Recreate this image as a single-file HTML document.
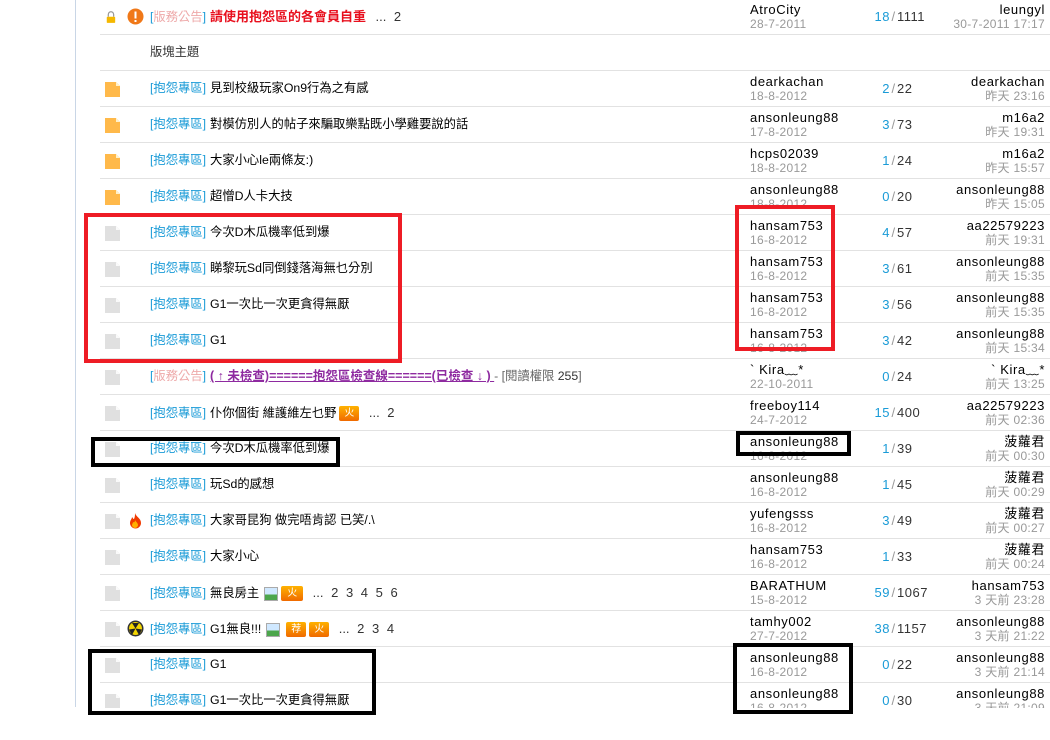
<!DOCTYPE html>
<html><head><meta charset="utf-8">
<style>
*{margin:0;padding:0;box-sizing:border-box}
body{width:1050px;height:740px;background:#fff;position:relative;overflow:hidden;font-family:"Liberation Sans","Noto Sans CJK TC",sans-serif;font-size:12px;color:#000}
.wrap{position:absolute;left:0;top:0;width:1050px;height:708px;overflow:hidden}
.vl{position:absolute;left:75px;top:0;width:1px;height:707px;background:#c9d6e6}
.row{position:absolute;left:100px;width:950px;height:36px;border-bottom:1px solid #e2e2e2}
.ic{position:absolute;left:4px;top:10px;width:17px;height:17px}
.t{position:absolute;left:50px;top:10px;white-space:nowrap;font-size:12.3px;line-height:15px}
.tag{color:#1a9bd7;margin-right:4px}
.pg{color:#333;font-size:13px;margin-left:6px;word-spacing:4px}
.au{position:absolute;left:650px;top:3px;font-size:13px;line-height:15px;white-space:nowrap;letter-spacing:.6px}
.au i{display:block;font-style:normal;color:#999;font-size:12px;line-height:14px;letter-spacing:.3px}
.ct{position:absolute;left:690px;width:200px;top:10px;font-size:13px;color:#333;letter-spacing:.5px;display:grid;grid-template-columns:100px 7px 93px}
.ct b{font-weight:normal;color:#1a9bd7;text-align:right}
.ct s{text-decoration:none;color:#999;text-align:center}
.lp{position:absolute;right:5px;top:3px;text-align:right;font-size:13px;line-height:15px;white-space:nowrap;letter-spacing:.6px}
.lp i{display:block;font-style:normal;color:#999;font-size:12px;line-height:14px;letter-spacing:.3px}
.box{position:absolute;border-style:solid}
.bd{display:inline-block;vertical-align:middle;height:15px;border-radius:2px;color:#fff;font-size:10px;line-height:15px;text-align:center;background:linear-gradient(#ffb200,#f06a00);margin-left:3px}
.pic{display:inline-block;vertical-align:middle;width:14px;height:14px;border:1px solid #aaa;background:linear-gradient(#cfe8ff 55%,#4ca64c 55%);margin-left:5px}
</style></head><body>
<div class="wrap">
<div class="vl"></div>

<div class="row" style="top:-1px">
 <svg class="ic" viewBox="0 0 17 16" style="left:6px;top:10px;width:13px"><path d="M3 7V4a3.5 3.5 0 0 1 7 0v3" fill="none" stroke="#999" stroke-width="1.6"/><rect x="1" y="7" width="11" height="8" rx="1" fill="#f5b800"/></svg>
 <svg style="position:absolute;left:27px;top:9px;width:17px;height:17px" viewBox="0 0 17 17"><circle cx="8.5" cy="8.5" r="8" fill="#f07818"/><rect x="7.5" y="3.5" width="2" height="7" fill="#fff"/><rect x="7.5" y="12" width="2" height="2" fill="#fff"/></svg>
 <div class="t"><span class="tag">[<span style="color:#eaa">版務公告</span>]</span><b style="color:#e8101e;font-size:13px">請使用抱怨區的各會員自重</b> <span class="pg">... 2</span></div>
 <div class="au">AtroCity<i>28-7-2011</i></div>
 <div class="ct"><b>18</b><s>/</s>1111</div>
 <div class="lp">leungyl<i>30-7-2011 17:17</i></div>
</div>
<div class="row" style="top:35px"><div class="t" style="color:#333">版塊主題</div></div>

<div class="row" style="top:71px"><svg class="ic" viewBox="0 0 17 17"><path d="M1 1h11l4 4v11H1z" fill="#ffb94a"/><path d="M12 1v4h4z" fill="#fff2cc"/></svg><div class="t"><span class="tag">[抱怨專區]</span>見到校級玩家On9行為之有感</div><div class="au">dearkachan<i>18-8-2012</i></div><div class="ct"><b>2</b><s>/</s>22</div><div class="lp">dearkachan<i>昨天 23:16</i></div></div>
<div class="row" style="top:107px"><svg class="ic" viewBox="0 0 17 17"><path d="M1 1h11l4 4v11H1z" fill="#ffb94a"/><path d="M12 1v4h4z" fill="#fff2cc"/></svg><div class="t"><span class="tag">[抱怨專區]</span>對模仿別人的帖子來騙取樂點既小學雞要說的話</div><div class="au">ansonleung88<i>17-8-2012</i></div><div class="ct"><b>3</b><s>/</s>73</div><div class="lp">m16a2<i>昨天 19:31</i></div></div>
<div class="row" style="top:143px"><svg class="ic" viewBox="0 0 17 17"><path d="M1 1h11l4 4v11H1z" fill="#ffb94a"/><path d="M12 1v4h4z" fill="#fff2cc"/></svg><div class="t"><span class="tag">[抱怨專區]</span>大家小心le兩條友:)</div><div class="au">hcps02039<i>18-8-2012</i></div><div class="ct"><b>1</b><s>/</s>24</div><div class="lp">m16a2<i>昨天 15:57</i></div></div>
<div class="row" style="top:179px"><svg class="ic" viewBox="0 0 17 17"><path d="M1 1h11l4 4v11H1z" fill="#ffb94a"/><path d="M12 1v4h4z" fill="#fff2cc"/></svg><div class="t"><span class="tag">[抱怨專區]</span>超憎D人卡大技</div><div class="au">ansonleung88<i>18-8-2012</i></div><div class="ct"><b>0</b><s>/</s>20</div><div class="lp">ansonleung88<i>昨天 15:05</i></div></div>

<div class="row" style="top:215px"><svg class="ic" viewBox="0 0 17 17"><path d="M1 1h11l4 4v11H1z" fill="#e0e0e0"/><path d="M12 1v4h4z" fill="#fafafa"/></svg><div class="t"><span class="tag">[抱怨專區]</span>今次D木瓜機率低到爆</div><div class="au">hansam753<i>16-8-2012</i></div><div class="ct"><b>4</b><s>/</s>57</div><div class="lp">aa22579223<i>前天 19:31</i></div></div>
<div class="row" style="top:251px"><svg class="ic" viewBox="0 0 17 17"><path d="M1 1h11l4 4v11H1z" fill="#e0e0e0"/><path d="M12 1v4h4z" fill="#fafafa"/></svg><div class="t"><span class="tag">[抱怨專區]</span>睇黎玩Sd同倒錢落海無乜分別</div><div class="au">hansam753<i>16-8-2012</i></div><div class="ct"><b>3</b><s>/</s>61</div><div class="lp">ansonleung88<i>前天 15:35</i></div></div>
<div class="row" style="top:287px"><svg class="ic" viewBox="0 0 17 17"><path d="M1 1h11l4 4v11H1z" fill="#e0e0e0"/><path d="M12 1v4h4z" fill="#fafafa"/></svg><div class="t"><span class="tag">[抱怨專區]</span>G1一次比一次更貪得無厭</div><div class="au">hansam753<i>16-8-2012</i></div><div class="ct"><b>3</b><s>/</s>56</div><div class="lp">ansonleung88<i>前天 15:35</i></div></div>
<div class="row" style="top:323px"><svg class="ic" viewBox="0 0 17 17"><path d="M1 1h11l4 4v11H1z" fill="#e0e0e0"/><path d="M12 1v4h4z" fill="#fafafa"/></svg><div class="t"><span class="tag">[抱怨專區]</span>G1</div><div class="au">hansam753<i>16-8-2012</i></div><div class="ct"><b>3</b><s>/</s>42</div><div class="lp">ansonleung88<i>前天 15:34</i></div></div>
<div class="row" style="top:359px"><svg class="ic" viewBox="0 0 17 17"><path d="M1 1h11l4 4v11H1z" fill="#e0e0e0"/><path d="M12 1v4h4z" fill="#fafafa"/></svg><div class="t"><span class="tag">[<span style="color:#eaa">版務公告</span>]</span><b style="color:#8e2aa0;text-decoration:underline;font-size:12.5px">( ↑ 未檢查)======抱怨區檢查線======(已檢查 ↓ ) </b> <span style="color:#666">- [閱讀權限 <span style="color:#333">255</span>]</span></div><div class="au">` Kira﹏*<i>22-10-2011</i></div><div class="ct"><b>0</b><s>/</s>24</div><div class="lp">` Kira﹏*<i>前天 13:25</i></div></div>
<div class="row" style="top:395px"><svg class="ic" viewBox="0 0 17 17"><path d="M1 1h11l4 4v11H1z" fill="#e0e0e0"/><path d="M12 1v4h4z" fill="#fafafa"/></svg><div class="t"><span class="tag">[抱怨專區]</span>仆你個街 維護維左乜野<span class="bd" style="width:20px">火</span> <span class="pg">... 2</span></div><div class="au">freeboy114<i>24-7-2012</i></div><div class="ct"><b>15</b><s>/</s>400</div><div class="lp">aa22579223<i>前天 02:36</i></div></div>
<div class="row" style="top:431px"><svg class="ic" viewBox="0 0 17 17"><path d="M1 1h11l4 4v11H1z" fill="#e0e0e0"/><path d="M12 1v4h4z" fill="#fafafa"/></svg><div class="t"><span class="tag">[抱怨專區]</span>今次D木瓜機率低到爆</div><div class="au">ansonleung88<i>16-8-2012</i></div><div class="ct"><b>1</b><s>/</s>39</div><div class="lp">菠蘿君<i>前天 00:30</i></div></div>
<div class="row" style="top:467px"><svg class="ic" viewBox="0 0 17 17"><path d="M1 1h11l4 4v11H1z" fill="#e0e0e0"/><path d="M12 1v4h4z" fill="#fafafa"/></svg><div class="t"><span class="tag">[抱怨專區]</span>玩Sd的感想</div><div class="au">ansonleung88<i>16-8-2012</i></div><div class="ct"><b>1</b><s>/</s>45</div><div class="lp">菠蘿君<i>前天 00:29</i></div></div>
<div class="row" style="top:503px"><svg class="ic" viewBox="0 0 17 17"><path d="M1 1h11l4 4v11H1z" fill="#e0e0e0"/><path d="M12 1v4h4z" fill="#fafafa"/></svg><svg style="position:absolute;left:27px;top:9px;width:17px;height:17px" viewBox="0 0 17 17"><path d="M8 1c1 4 6 5 6 10a5.5 5.5 0 0 1-11 0c0-3 2-4 2-6 1 1 1 2 2 2 1-2 1-4 1-6z" fill="#f03a00"/><path d="M8 8c1 2 3 3 3 5a3 3 0 0 1-6 0c0-1 1-2 1-3 1 1 2 0 2-2z" fill="#ffb000"/></svg><div class="t"><span class="tag">[抱怨專區]</span>大家哥昆狗 做完唔肯認 已笑/.\</div><div class="au">yufengsss<i>16-8-2012</i></div><div class="ct"><b>3</b><s>/</s>49</div><div class="lp">菠蘿君<i>前天 00:27</i></div></div>
<div class="row" style="top:539px"><svg class="ic" viewBox="0 0 17 17"><path d="M1 1h11l4 4v11H1z" fill="#e0e0e0"/><path d="M12 1v4h4z" fill="#fafafa"/></svg><div class="t"><span class="tag">[抱怨專區]</span>大家小心</div><div class="au">hansam753<i>16-8-2012</i></div><div class="ct"><b>1</b><s>/</s>33</div><div class="lp">菠蘿君<i>前天 00:24</i></div></div>
<div class="row" style="top:575px"><svg class="ic" viewBox="0 0 17 17"><path d="M1 1h11l4 4v11H1z" fill="#e0e0e0"/><path d="M12 1v4h4z" fill="#fafafa"/></svg><div class="t"><span class="tag">[抱怨專區]</span>無良房主<span class="pic"></span><span class="bd" style="width:22px">火</span> <span class="pg">... 2 3 4 5 6</span></div><div class="au">BARATHUM<i>15-8-2012</i></div><div class="ct"><b>59</b><s>/</s>1067</div><div class="lp">hansam753<i>3 天前 23:28</i></div></div>
<div class="row" style="top:611px"><svg class="ic" viewBox="0 0 17 17"><path d="M1 1h11l4 4v11H1z" fill="#e0e0e0"/><path d="M12 1v4h4z" fill="#fafafa"/></svg><svg style="position:absolute;left:27px;top:9px;width:17px;height:17px" viewBox="0 0 17 17"><circle cx="8.5" cy="8.5" r="8" fill="#333"/><circle cx="8.5" cy="8.5" r="6.5" fill="#f2d400"/><path d="M8.5 8.5L5 3h7zM8.5 8.5l6.5 1-3 5.5zM8.5 8.5L2 9.5 5 15z" fill="#222"/></svg><div class="t"><span class="tag">[抱怨專區]</span>G1無良!!!<span class="pic"></span><span class="bd" style="width:20px;margin-left:6px">荐</span><span class="bd" style="width:20px">火</span> <span class="pg">... 2 3 4</span></div><div class="au">tamhy002<i>27-7-2012</i></div><div class="ct"><b>38</b><s>/</s>1157</div><div class="lp">ansonleung88<i>3 天前 21:22</i></div></div>
<div class="row" style="top:647px"><svg class="ic" viewBox="0 0 17 17"><path d="M1 1h11l4 4v11H1z" fill="#e0e0e0"/><path d="M12 1v4h4z" fill="#fafafa"/></svg><div class="t"><span class="tag">[抱怨專區]</span>G1</div><div class="au">ansonleung88<i>16-8-2012</i></div><div class="ct"><b>0</b><s>/</s>22</div><div class="lp">ansonleung88<i>3 天前 21:14</i></div></div>
<div class="row" style="top:683px"><svg class="ic" viewBox="0 0 17 17"><path d="M1 1h11l4 4v11H1z" fill="#e0e0e0"/><path d="M12 1v4h4z" fill="#fafafa"/></svg><div class="t"><span class="tag">[抱怨專區]</span>G1一次比一次更貪得無厭</div><div class="au">ansonleung88<i>16-8-2012</i></div><div class="ct"><b>0</b><s>/</s>30</div><div class="lp">ansonleung88<i>3 天前 21:09</i></div></div>
</div>

<div class="box" style="left:84px;top:213px;width:318px;height:150px;border-width:4px;border-color:#ee1c25"></div>
<div class="box" style="left:735px;top:205px;width:100px;height:146px;border-width:4px;border-color:#ee1c25"></div>
<div class="box" style="left:91px;top:437px;width:249px;height:30px;border-width:4px;border-color:#000"></div>
<div class="box" style="left:736px;top:431px;width:115px;height:25px;border-width:4px;border-color:#000"></div>
<div class="box" style="left:88px;top:649px;width:288px;height:66px;border-width:4px;border-color:#000"></div>
<div class="box" style="left:733px;top:643px;width:120px;height:71px;border-width:4px;border-color:#000"></div>
</body></html>
